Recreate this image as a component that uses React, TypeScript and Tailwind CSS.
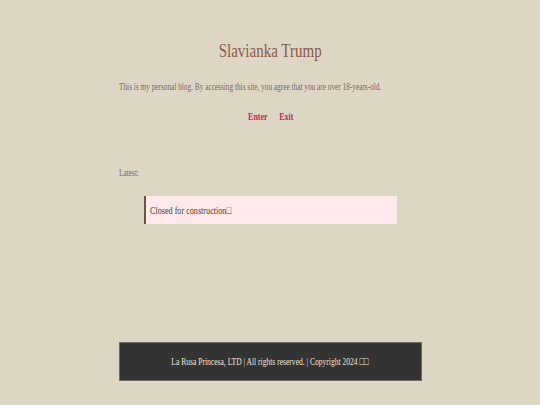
const serif = { fontFamily: '"Liberation Serif", "DejaVu Serif", serif' }

export default function App() {
  return (
    <div className="min-h-[405px] w-full bg-[#ded6c4] pt-[36px]" style={serif}>
      <div className="mx-auto w-[303px]">
        <h1 className="text-center text-[19px] leading-[30px] text-[#8a5a4b]">
          <span className="inline-block scale-x-[0.79] whitespace-nowrap">Slavianka Trump</span>
        </h1>

        <p className="mt-[14px] text-[10.5px] leading-[14px] text-[#756b64] whitespace-nowrap">
          <span className="inline-block origin-left scale-x-[0.695]">
            This is my personal blog. By accessing this site, you agree that you are over 18-years-old.
          </span>
        </p>

        <div className="mt-[16px] flex justify-center gap-[6px] text-[10.5px] font-bold leading-[14px] text-[#c71f63]">
          <a className="inline-block scale-x-[0.76]">Enter</a>
          <a className="inline-block scale-x-[0.76]">Exit</a>
        </div>

        <p className="mt-[42px] text-[10.5px] leading-[14px] text-[#756b64]">
          <span className="inline-block origin-left scale-x-[0.7]">Latest:</span>
        </p>

        <div className="mx-[25px] mt-[16px] flex h-[28px] items-center border-l-2 border-[#6a5548] bg-[#ffe9ea] px-[4px]">
          <span className="inline-block origin-left scale-x-[0.74] whitespace-nowrap text-[11px] text-[#4b4040]">
            Closed for construction□
          </span>
        </div>

        <footer className="mt-[118px] flex h-[39px] items-center justify-center border border-[#6f6a60] bg-[#333333] text-[10.5px] text-[#ece4d4]">
          <span className="inline-block scale-x-[0.72] whitespace-nowrap">
            La Rusa Princesa, LTD | All rights reserved. | Copyright 2024 □□
          </span>
        </footer>
      </div>
    </div>
  )
}
